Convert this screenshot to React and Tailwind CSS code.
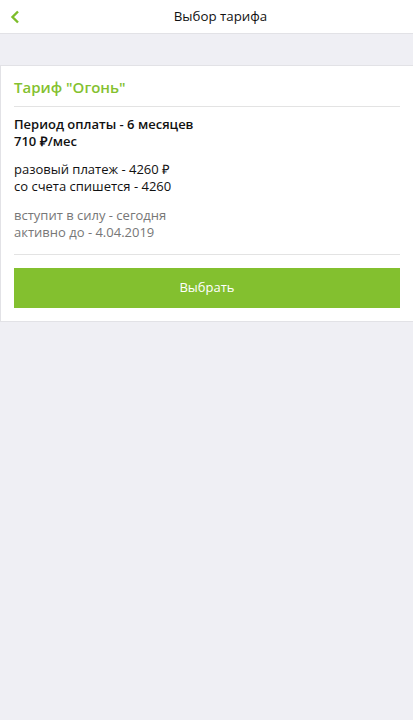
import React from "react";

export default function App() {
  return (
    <div className="min-h-[720px] bg-[#efeff4] font-['Open_Sans',sans-serif] text-[#111]">
      {/* Header */}
      <div className="relative flex h-[34px] items-center justify-center border-b border-[#e2e2e6] bg-white pl-[28px]">
        <button className="absolute left-[9px] top-[9px] flex h-[16px] w-[12px] items-center justify-center">
          <svg width="10" height="14" viewBox="0 0 10 14">
            <path d="M8 1.5 L2.5 7 L8 12.5" fill="none" stroke="#7dbd2a" strokeWidth="2.4" />
          </svg>
        </button>
        <h1 className="text-[13.3px] font-normal">Выбор тарифа</h1>
      </div>

      <div className="h-[31px]" />

      {/* Card */}
      <div className="border-y border-l border-[#e2e2e6] bg-white px-[13px] pb-[13px] pt-[9px]">
        <div className="border-b border-[#e3e3e3] pb-[7px] text-[15px] font-semibold leading-[24px] text-[#84c12f]">
          Тариф "Огонь"
        </div>

        <div className="pt-[9px] text-[13px] font-semibold leading-[17px]">
          <div>Период оплаты - 6 месяцев</div>
          <div>710 ₽/мес</div>
        </div>

        <div className="pt-[11px] text-[13px] leading-[17px]">
          <div>разовый платеж - 4260 ₽</div>
          <div>со счета спишется - 4260</div>
        </div>

        <div className="border-b border-[#e3e3e3] pb-[13px] pt-[12px] text-[13px] leading-[17px] text-[#777]">
          <div>вступит в силу - сегодня</div>
          <div>активно до - 4.04.2019</div>
        </div>

        <button className="mt-[13px] h-[40px] w-full bg-[#83c02f] text-[13px] text-white">
          Выбрать
        </button>
      </div>
    </div>
  );
}
